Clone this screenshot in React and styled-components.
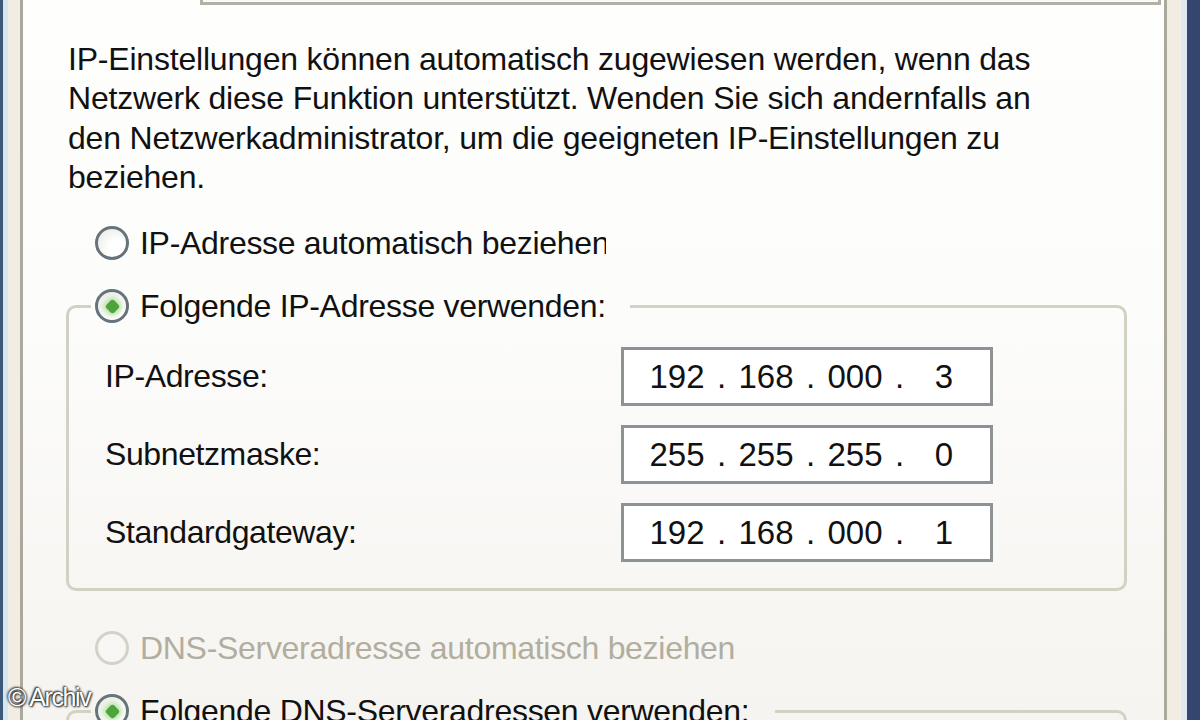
import React from 'react'
import styled, { createGlobalStyle } from 'styled-components'

const GlobalStyle = createGlobalStyle`
html, body {
    margin: 0;
    padding: 0;
    overflow: hidden;
    background: #ece9d8;
}
body {
    font-family: "Liberation Sans", Arial, sans-serif;
}
`

const octets = [
    { label: 'IP-Adresse:', value: ['192', '168', '000', '3'] },
    { label: 'Subnetzmaske:', value: ['255', '255', '255', '0'] },
    { label: 'Standardgateway:', value: ['192', '168', '000', '1'] },
]

function Radio({ checked, disabled }) {
    return (
        <RadioCircle $disabled={disabled}>
            {checked && <RadioDot />}
        </RadioCircle>
    )
}

function IpField({ value }) {
    return (
        <IpBox>
            {value.map((part, i) => (
                <React.Fragment key={i}>
                    {i > 0 && <IpDot>.</IpDot>}
                    <Octet>{part}</Octet>
                </React.Fragment>
            ))}
        </IpBox>
    )
}

export default function App() {
    return (
        <>
            <GlobalStyle />
            <Frame>
                <FrameInner>
                    <Panel>
                        <TabEdge />
                        <Intro>
                            IP-Einstellungen können automatisch zugewiesen werden, wenn das<br />
                            Netzwerk diese Funktion unterstützt. Wenden Sie sich andernfalls an<br />
                            den Netzwerkadministrator, um die geeigneten IP-Einstellungen zu<br />
                            beziehen.
                        </Intro>
                        <RadioRow>
                            <Radio />
                            <RadioLabel $clip={466}>IP-Adresse automatisch beziehen</RadioLabel>
                        </RadioRow>
                        <Group>
                            <Legend $width={539}>
                                <LegendRow>
                                    <Radio checked />
                                    <RadioLabel $clip={464}>Folgende IP-Adresse verwenden:</RadioLabel>
                                </LegendRow>
                            </Legend>
                            <Fields>
                                {octets.map((row) => (
                                    <FieldRow key={row.label}>
                                        <FieldLabel>{row.label}</FieldLabel>
                                        <IpField value={row.value} />
                                    </FieldRow>
                                ))}
                            </Fields>
                        </Group>
                        <RadioRow $top={39}>
                            <Radio disabled />
                            <RadioLabel $disabled>DNS-Serveradresse automatisch beziehen</RadioLabel>
                        </RadioRow>
                        <Group $open>
                            <Legend $width={684}>
                                <LegendRow>
                                    <Radio checked />
                                    <RadioLabel>Folgende DNS-Serveradressen verwenden:</RadioLabel>
                                </LegendRow>
                            </Legend>
                        </Group>
                    </Panel>
                </FrameInner>
                <Watermark>© Archiv</Watermark>
            </Frame>
        </>
    )
}

const Frame = styled.div`
position: relative;
width: 1200px;
height: 720px;
box-sizing: border-box;
border-left: 3px solid #3d5878;
border-right: 13px solid #34466f;
overflow: hidden;
`
const FrameInner = styled.div`
height: 100%;
box-sizing: border-box;
border-left: 5px solid #d8e6f0;
border-right: 6px solid #dfe9f1;
background: #f1ede2;
padding: 0 14px 0 12px;
`
const Panel = styled.div`
height: 100%;
box-sizing: border-box;
border-left: 3px solid #aba89c;
border-right: 3px solid #aba89c;
background: linear-gradient(#fefefd 0%, #fcfcfb 45%, #f6f4f0 100%);
overflow: hidden;
`
const TabEdge = styled.div`
height: 2px;
margin: 0 3px 0 177px;
border: 3px solid #b3b0a5;
border-top: 0;
background: #fbfbf9;
`
const Intro = styled.p`
margin: 35px 0 0 45px;
font-size: 32px;
line-height: 39.3px;
color: #111;
letter-spacing: -0.2px;
`
const RadioRow = styled.div`
display: flex;
align-items: center;
gap: 11px;
height: 36px;
margin: ${(p) => (p.$top ?? 28)}px 0 0 72px;
`
const LegendRow = styled.span`
display: flex;
align-items: center;
gap: 11px;
height: 36px;
margin-left: 4px;
`
const RadioCircle = styled.span`
position: relative;
flex: none;
width: 28px;
height: 28px;
border-radius: 50%;
border: 3px solid ${(p) => (p.$disabled ? '#d4d2c8' : '#67737b')};
background: ${(p) => (p.$disabled ? '#f8f7f3' : 'radial-gradient(circle at 65% 70%, #fff 30%, #e6e6e0 100%)')};
display: flex;
align-items: center;
justify-content: center;
`
const RadioDot = styled.span`
width: 11px;
height: 11px;
border-radius: 3px;
transform: rotate(45deg);
background: #4ea33a;
box-shadow: 0 0 5px 3px #b9e2a8;
`
const RadioLabel = styled.span`
font-size: 32px;
letter-spacing: -0.3px;
white-space: nowrap;
overflow: hidden;
color: ${(p) => (p.$disabled ? '#b1ae9f' : '#111')};
${(p) => p.$clip && `width: ${p.$clip}px;`}
`
const Group = styled.fieldset`
margin: 27px 37px 0 43px;
padding: 0 0 26px 0;
border: 3px solid #d3d1c3;
border-radius: 10px;
${(p) => p.$open && `border-bottom: 0; border-bottom-left-radius: 0; border-bottom-right-radius: 0; height: 200px;`}
`
const Legend = styled.legend`
margin-left: 22px;
padding: 0;
width: ${(p) => p.$width}px;
`
const Fields = styled.div`
display: flex;
flex-direction: column;
gap: 19px;
margin-top: 23px;
padding: 0 0 0 36px;
`
const FieldRow = styled.div`
display: flex;
align-items: center;
justify-content: space-between;
padding-right: 131px;
`
const FieldLabel = styled.span`
font-size: 32px;
letter-spacing: -0.4px;
color: #111;
`
const IpBox = styled.div`
display: flex;
align-items: center;
width: 372px;
height: 59px;
box-sizing: border-box;
border: 3px solid #8d9295;
background: #fff;
padding-left: 24px;
font-size: 33px;
color: #111;
`
const Octet = styled.span`
width: 58px;
text-align: center;
`
const IpDot = styled.span`
width: 31px;
text-align: center;
`
const Watermark = styled.div`
position: absolute;
left: 5px;
top: 683px;
font-size: 25px;
letter-spacing: -1.4px;
color: #fff;
text-shadow: 0 0 2px #333, 1px 1px 2px #222, -1px -1px 2px #222;
`
